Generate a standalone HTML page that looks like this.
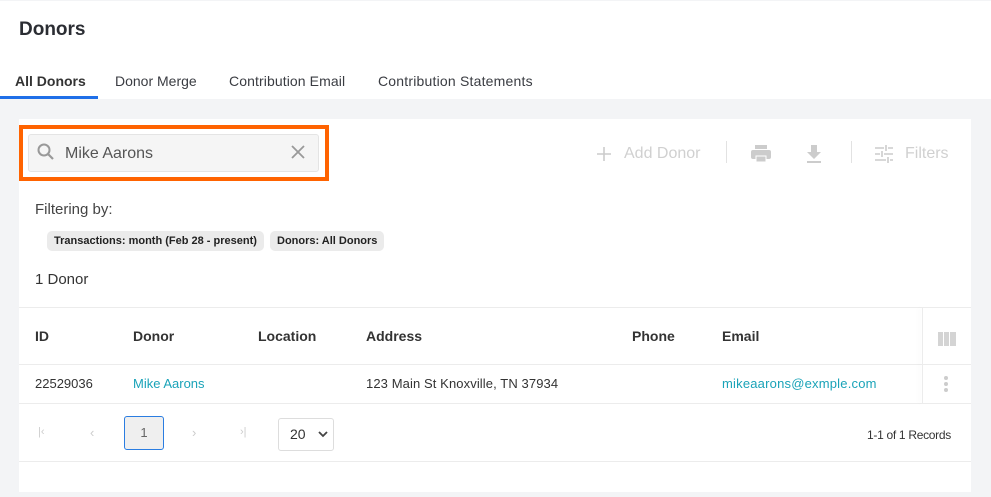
<!DOCTYPE html>
<html><head><style>
*{box-sizing:border-box;margin:0;padding:0}
body{width:991px;height:497px;background:#f3f4f6;font-family:"Liberation Sans",sans-serif;color:#2b2d33;position:relative;overflow:hidden}
.a{position:absolute;white-space:nowrap}
</style></head><body>
<div class="a" style="left:0;top:1px;width:991px;height:98px;background:#fff"></div>
<div class="a" style="left:19px;top:19px;font-size:19px;font-weight:bold;color:#2b2d33">Donors</div>
<div class="a" style="left:15px;top:73px;font-size:14px;font-weight:bold;color:#333">All Donors</div>
<div class="a" style="left:0;top:96px;width:98px;height:3px;background:#1f6fe8"></div>
<div class="a" style="left:115px;top:73px;font-size:14px;color:#3a3c42">Donor Merge</div>
<div class="a" style="left:229px;top:73px;font-size:14px;color:#3a3c42;letter-spacing:0.1px">Contribution Email</div>
<div class="a" style="left:378px;top:73px;font-size:14px;color:#3a3c42;letter-spacing:0.2px">Contribution Statements</div>

<div class="a" style="left:19px;top:119px;width:952px;height:373px;background:#fff"></div>
<div class="a" style="left:19px;top:125px;width:310px;height:56px;border:4px solid #ff6300"></div>
<div class="a" style="left:28px;top:134px;width:291px;height:38px;background:#f5f5f5;border:1px solid #e4e4e4;border-radius:3px"></div>
<svg class="a" style="left:36px;top:142px" width="20" height="20" viewBox="0 0 20 20"><circle cx="8" cy="8" r="5.5" fill="none" stroke="#999" stroke-width="2"/><line x1="12" y1="12" x2="17" y2="17" stroke="#999" stroke-width="2.2"/></svg>
<div class="a" style="left:65px;top:145px;font-size:16px;color:#555">Mike Aarons</div>
<svg class="a" style="left:290px;top:144px" width="16" height="16"><path d="M2 2L14 14M14 2L2 14" stroke="#999" stroke-width="1.8"/></svg>

<svg class="a" style="left:596px;top:146px" width="16" height="16"><path d="M8 1V15M1 8H15" stroke="#ccc" stroke-width="1.6"/></svg>
<div class="a" style="left:624px;top:145px;font-size:16px;color:#d0d0d0">Add Donor</div>
<div class="a" style="left:726px;top:141px;width:1px;height:22px;background:#e2e2e2"></div>
<svg class="a" style="left:750px;top:144px" width="22" height="20"><rect x="5" y="1" width="12" height="4" fill="#ccc"/><rect x="1" y="6" width="20" height="9" rx="2" fill="#ccc"/><rect x="6" y="12" width="10" height="6" fill="#ccc" stroke="#fff" stroke-width="1"/></svg>
<svg class="a" style="left:805px;top:144px" width="18" height="20"><path d="M6 1H12V8H16L9 15L2 8H6Z" fill="#ccc"/><rect x="2" y="17" width="14" height="2" fill="#ccc"/></svg>
<div class="a" style="left:851px;top:141px;width:1px;height:22px;background:#e2e2e2"></div>
<svg class="a" style="left:874px;top:144px" width="20" height="20"><path d="M1 4H10M14 4H19M12 1V7M1 10H6M10 10H19M8 7V13M1 16H12M16 16H19M14 13V19" stroke="#ccc" stroke-width="1.6"/></svg>
<div class="a" style="left:905px;top:145px;font-size:16px;color:#d0d0d0">Filters</div>

<div class="a" style="left:35px;top:201px;font-size:15px;color:#444">Filtering by:</div>
<div class="a" style="left:47px;top:231px;height:20px;padding:0 7px;line-height:20px;background:#ebebeb;border-radius:5px;font-size:11px;font-weight:bold;color:#222">Transactions: month (Feb 28 - present)</div>
<div class="a" style="left:270px;top:231px;height:20px;padding:0 7px;line-height:20px;background:#ebebeb;border-radius:5px;font-size:11px;font-weight:bold;color:#222">Donors: All Donors</div>
<div class="a" style="left:35px;top:271px;font-size:15px;color:#333">1 Donor</div>

<div class="a" style="left:19px;top:307px;width:952px;height:1px;background:#ececec"></div>
<div class="a" style="left:19px;top:364px;width:952px;height:1px;background:#ececec"></div>
<div class="a" style="left:19px;top:403px;width:952px;height:1px;background:#ececec"></div>
<div class="a" style="left:19px;top:461px;width:952px;height:1px;background:#ececec"></div>
<div class="a" style="left:922px;top:307px;width:1px;height:97px;background:#ececec;box-shadow:-3px 0 4px rgba(0,0,0,0.05)"></div>
<div class="a" style="top:328px;left:35px;font-size:14px;font-weight:bold;color:#333">ID</div>
<div class="a" style="top:328px;left:133px;font-size:14px;font-weight:bold;color:#333">Donor</div>
<div class="a" style="top:328px;left:258px;font-size:14px;font-weight:bold;color:#333">Location</div>
<div class="a" style="top:328px;left:366px;font-size:14px;font-weight:bold;color:#333">Address</div>
<div class="a" style="top:328px;left:632px;font-size:14px;font-weight:bold;color:#333">Phone</div>
<div class="a" style="top:328px;left:722px;font-size:14px;font-weight:bold;color:#333">Email</div>
<svg class="a" style="left:938px;top:332px" width="18" height="14"><rect x="0" y="0" width="5" height="14" fill="#d4d4d4"/><rect x="6" y="0" width="5" height="14" fill="#d4d4d4"/><rect x="12" y="0" width="6" height="14" fill="#d4d4d4"/></svg>
<div class="a" style="top:376px;left:35px;font-size:13px;color:#333">22529036</div>
<div class="a" style="top:376px;left:133px;font-size:13px;color:#1aa3b8">Mike Aarons</div>
<div class="a" style="top:376px;left:366px;font-size:13px;color:#333;letter-spacing:0.1px">123 Main St Knoxville, TN 37934</div>
<div class="a" style="top:376px;left:722px;font-size:13px;color:#1aa3b8;letter-spacing:0.2px">mikeaarons@exmple.com</div>
<svg class="a" style="left:943px;top:375px" width="6" height="18"><circle cx="3" cy="3" r="2" fill="#ccc"/><circle cx="3" cy="9" r="2" fill="#ccc"/><circle cx="3" cy="15" r="2" fill="#ccc"/></svg>

<div class="a" style="left:38px;top:426px;font-size:11px;color:#ccc">|&lsaquo;</div>
<div class="a" style="left:90px;top:425px;font-size:13px;color:#ccc">&lsaquo;</div>
<div class="a" style="left:124px;top:416px;width:40px;height:34px;border:1px solid #2a7de1;border-radius:3px;background:#efefef;text-align:center;line-height:32px;font-size:13px;color:#666">1</div>
<div class="a" style="left:192px;top:425px;font-size:13px;color:#ccc">&rsaquo;</div>
<div class="a" style="left:240px;top:426px;font-size:11px;color:#ccc">&rsaquo;|</div>
<div class="a" style="left:278px;top:418px;width:56px;height:33px;border:1px solid #ddd;border-radius:3px;font-size:14px;color:#333;line-height:31px;padding-left:11px">20</div>
<svg class="a" style="left:318px;top:431px" width="10" height="7"><path d="M1 1L5 5L9 1" stroke="#444" stroke-width="1.8" fill="none"/></svg>
<div class="a" style="left:867px;top:428px;font-size:12px;color:#333;letter-spacing:-0.3px">1-1 of 1 Records</div>
</body></html>
